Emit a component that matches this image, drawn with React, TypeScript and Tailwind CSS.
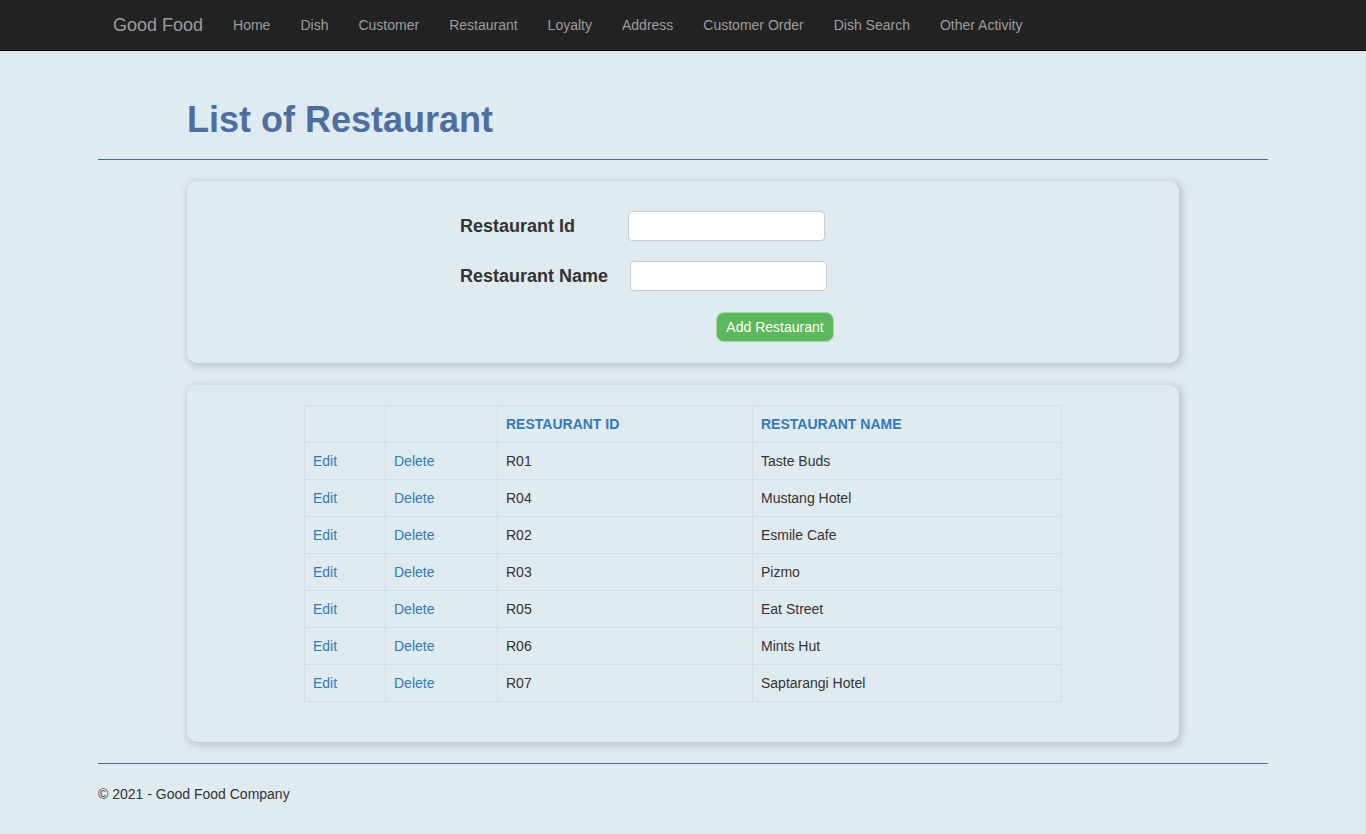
import React from 'react';

const navLinks = ['Home', 'Dish', 'Customer', 'Restaurant', 'Loyalty', 'Address', 'Customer Order', 'Dish Search', 'Other Activity'];

const restaurants = [
    { id: 'R01', name: 'Taste Buds' },
    { id: 'R04', name: 'Mustang Hotel' },
    { id: 'R02', name: 'Esmile Cafe' },
    { id: 'R03', name: 'Pizmo' },
    { id: 'R05', name: 'Eat Street' },
    { id: 'R06', name: 'Mints Hut' },
    { id: 'R07', name: 'Saptarangi Hotel' },
];

export default function App() {
    return (
        <div className="min-h-screen bg-[#e0ebf1] text-[#333] text-[14px] font-['Liberation_Sans',Arial,sans-serif]">
            {/* Navbar */}
            <nav className="h-[51px] bg-[#222] border-b border-[#080808]">
                <div className="w-[1170px] mx-auto flex items-center h-[50px]">
                    <span className="px-[15px] text-[18px] text-[#9d9d9d]">Good Food</span>
                    <ul className="flex">
                        {navLinks.map((l) => (
                            <li key={l} className="px-[15px] text-[#9d9d9d]">{l}</li>
                        ))}
                    </ul>
                </div>
            </nav>

            <div className="w-[1170px] mx-auto">
                <h2 className="pl-[89px] pt-[49px] text-[36px] leading-[40px] font-bold text-[#4e6ea0]">List of Restaurant</h2>
                <hr className="mt-[19px] border-0 border-t border-[#4f6a98]" />

                {/* Add form panel */}
                <div className="mx-[89px] mt-[21px] w-[992px] rounded-[10px] bg-[#e0ebf1] shadow-[2px_2px_6px_2px_rgba(60,60,60,0.2)] pt-[30px] pb-[21px] pl-[273px]">
                    <div className="flex items-center h-[30px]">
                        <label className="w-[168px] text-[18px] font-bold text-[#333]">Restaurant Id</label>
                        <input className="w-[197px] h-[30px] bg-white border border-[#ccc] rounded-[4px]" />
                    </div>
                    <div className="flex items-center h-[30px] mt-[20px]">
                        <label className="w-[170px] text-[18px] font-bold text-[#333]">Restaurant Name</label>
                        <input className="w-[197px] h-[30px] bg-white border border-[#ccc] rounded-[4px]" />
                    </div>
                    <div className="mt-[21px] pl-[256px]">
                        <button className="h-[30px] w-[118px] rounded-[8px] bg-[#5cb85c] border border-[#a8d8a8] text-white text-[14px]">Add Restaurant</button>
                    </div>
                </div>

                {/* Table panel */}
                <div className="mx-[89px] mt-[22px] w-[992px] rounded-[10px] bg-[#e0ebf1] shadow-[2px_2px_6px_2px_rgba(60,60,60,0.2)] pt-[20px] pb-[40px]">
                    <table className="ml-[117px] w-[758px] border-collapse border border-[#d6dde2]">
                        <thead>
                            <tr className="h-[37px]">
                                <th className="w-[81px] border border-[#d6dde2]"></th>
                                <th className="w-[112px] border border-[#d6dde2]"></th>
                                <th className="w-[255px] border border-[#d6dde2] px-[8px] text-left font-bold text-[#337ab7]">RESTAURANT ID</th>
                                <th className="border border-[#d6dde2] px-[8px] text-left font-bold text-[#337ab7]">RESTAURANT NAME</th>
                            </tr>
                        </thead>
                        <tbody>
                            {restaurants.map((r) => (
                                <tr key={r.id} className="h-[37px]">
                                    <td className="border border-[#d6dde2] px-[8px] text-[#337ab7]">Edit</td>
                                    <td className="border border-[#d6dde2] px-[8px] text-[#337ab7]">Delete</td>
                                    <td className="border border-[#d6dde2] px-[8px]">{r.id}</td>
                                    <td className="border border-[#d6dde2] px-[8px]">{r.name}</td>
                                </tr>
                            ))}
                        </tbody>
                    </table>
                </div>

                <hr className="mt-[21px] border-0 border-t border-[#4f6a98]" />
                <footer className="pt-[20px] pb-[24px]">© 2021 - Good Food Company</footer>
            </div>
        </div>
    );
}
